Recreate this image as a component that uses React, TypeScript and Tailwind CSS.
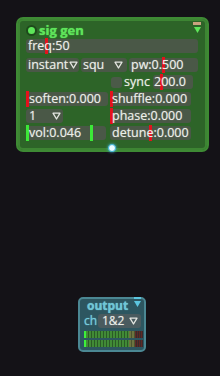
import React from "react";

// small outline "▽" used by the dropdown fields
function Tri({ className = "" }: { className?: string }) {
  return (
    <svg width="9" height="8" viewBox="0 0 9 8" className={className}>
      <path d="M1 1.2 H8 L4.5 7 Z" fill="none" stroke="currentColor" strokeWidth="1.3" strokeLinejoin="round" />
    </svg>
  );
}

function Field({ children, className = "" }: { children?: React.ReactNode; className?: string }) {
  return (
    <div className={`relative h-[14px] rounded-[3px] bg-[#4a5847] flex items-center leading-none whitespace-nowrap ${className}`}>
      {children}
    </div>
  );
}

function Mark({ className }: { className: string }) {
  return <span className={`absolute top-[-1px] bottom-[-1px] w-[3px] ${className}`} />;
}

function Label({ children }: { children: React.ReactNode }) {
  return <span className="relative">{children}</span>;
}

function Meter() {
  return (
    <div className="flex h-[7px] w-[59px]">
      <div className="w-[2px] bg-[#3df03a]" />
      <div className="w-[43px] bg-[repeating-linear-gradient(90deg,#418a36_0_2px,#2b5a26_2px_3px)]" />
      <div className="w-[6px] bg-[repeating-linear-gradient(90deg,#6c7440_0_2px,#4b5430_2px_3px)]" />
      <div className="w-[8px] bg-[repeating-linear-gradient(90deg,#5e2a26_0_1px,#3a2a2c_1px_2px)]" />
    </div>
  );
}

export default function App() {
  return (
    <div className="relative w-[220px] h-[376px] overflow-hidden bg-[#141217] font-['Open_Sans',sans-serif] text-[12.5px] text-[#eceee9] [text-shadow:0_0_1px_rgba(236,238,233,0.55)]">
      {/* sig gen node */}
      <div className="absolute left-[16px] top-[17px] w-[193px] h-[135px] rounded-[7px] border-2 border-[#3e8a34] bg-[#2d6428] shadow-[inset_0_0_0_2px_#3d8533] pl-[8px] pr-[9px]">
        <div className="flex items-center h-[17px] mt-[3px]">
          <span className="w-[11px] h-[11px] rounded-full bg-[#5ee65a] border-2 border-[#1e4a1b]" />
          <span className="ml-[2px] text-[13px] font-bold text-[#5ee45a] leading-none [text-shadow:0_0_1px_#5ee45a]">sig gen</span>
          <div className="ml-auto mr-[-3px] flex flex-col items-center gap-[2px] self-start">
            <span className="w-[8px] h-[3px] bg-[#c9a37f]" />
            <svg width="7" height="6" viewBox="0 0 7 6">
              <path d="M0 0 H7 L3.5 6 Z" fill="#5ee65a" />
            </svg>
          </div>
        </div>

        <Field className="pl-[2px]">
          <Mark className="left-[19px] bg-[#e3121c]" />
          <Label>freq:50</Label>
        </Field>

        <div className="flex gap-[2px] mt-[5px]">
          <Field className="w-[53px] pl-[2px]">
            <Label>instant</Label>
            <Tri className="ml-[1px] text-[#e4e6e1]" />
          </Field>
          <Field className="w-[46px] pl-[2px]">
            <Label>squ</Label>
            <Tri className="ml-auto mr-[4px] text-[#e4e6e1]" />
          </Field>
          <Field className="flex-1 pl-[2px]">
            <Mark className="left-[33px] bg-[#e3121c]" />
            <Label>pw:0.500</Label>
          </Field>
        </div>

        <div className="flex items-center mt-[3px] h-[14px] pl-[85px]">
          <span className="w-[11px] h-[11px] rounded-[3px] bg-[#4b5a48]" />
          <span className="ml-[2px] w-[29px]">sync</span>
          <Field className="w-[40px] pl-[1px]">
            <Mark className="left-[7px] bg-[#e3121c]" />
            <Label>200.0</Label>
          </Field>
        </div>

        <div className="grid grid-cols-[84px_81px] gap-y-[3px] mt-[3px]">
          <Field className="w-[82px] pl-[3px]">
            <Mark className="left-0 bg-[#e3121c]" />
            <Label>soften:0.000</Label>
          </Field>
          <Field className="pl-[2px]">
            <Mark className="left-0 bg-[#e3121c]" />
            <Label>shuffle:0.000</Label>
          </Field>
          <Field className="w-[37px] pl-[3px]">
            <Label>1</Label>
            <Tri className="ml-auto mr-[2px] text-[#e4e6e1]" />
          </Field>
          <Field className="pl-[2px]">
            <Mark className="left-0 bg-[#e3121c]" />
            <Label>phase:0.000</Label>
          </Field>
          <Field className="w-[80px] pl-[3px]">
            <Mark className="left-0 bg-[#3ce838]" />
            <Mark className="left-[64px] bg-[#3ce838]" />
            <Label>vol:0.046</Label>
          </Field>
          <Field className="pl-[2px]">
            <Mark className="left-[39px] bg-[#e3121c]" />
            <Label>detune:0.000</Label>
          </Field>
        </div>
      </div>

      {/* output port */}
      <span className="absolute left-[108px] top-[144px] w-[8px] h-[8px] rounded-full bg-[#eafcff] border-[1.5px] border-[#3fb4d8] shadow-[0_0_3px_#3fb4d8]" />

      {/* output node */}
      <div className="absolute left-[78px] top-[297px] w-[68px] h-[55px] rounded-[5px] border-2 border-[#4b8793] bg-[#2d5660] px-[2px] text-[12px]">
        <div className="flex items-center h-[13px] pl-[5px]">
          <span className="font-bold text-[#6fc6d6] leading-none [text-shadow:0_0_1px_#6fc6d6]">output</span>
          <div className="ml-auto mr-[1px] flex flex-col items-center gap-[2px] self-start mt-[-2px]">
            <span className="w-[7px] h-[2px] bg-[#5cc6e0]" />
            <svg width="7" height="6" viewBox="0 0 7 6">
              <path d="M0 0 H7 L3.5 6 Z" fill="#5cc6e0" />
            </svg>
          </div>
        </div>
        <div className="flex items-center mt-[2px] h-[14px]">
          <span className="ml-[2px] text-[#74cadb] leading-none [text-shadow:0_0_1px_#74cadb]">ch</span>
          <div className="ml-auto mr-[1px] w-[43px] h-[14px] rounded-[3px] bg-[#4a5b5f] flex items-center pl-[4px] leading-none">
            <span>1&amp;2</span>
            <Tri className="ml-auto mr-[3px] text-[#e4e6e1]" />
          </div>
        </div>
        <div className="flex flex-col gap-[2px] mt-[3px] pl-[2px]">
          <Meter />
          <Meter />
        </div>
      </div>
    </div>
  );
}
